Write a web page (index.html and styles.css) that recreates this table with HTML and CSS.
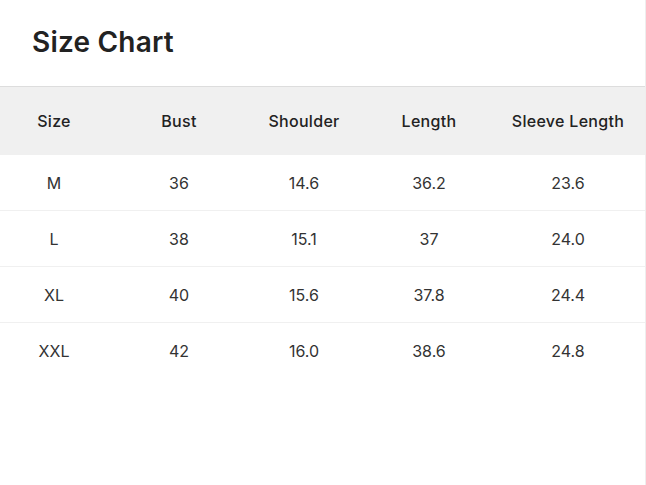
FILE: index.html
```html
<!DOCTYPE html>
<html>
<head>
<meta charset="utf-8">
<link rel="stylesheet" href="styles.css">
</head>
<body>
<div class="page">
  <h1 class="title">Size Chart</h1>
  <table class="chart">
    <colgroup>
      <col class="c1"><col class="c2"><col class="c3"><col class="c4"><col class="c5">
    </colgroup>
    <thead>
      <tr><th>Size</th><th>Bust</th><th>Shoulder</th><th>Length</th><th>Sleeve Length</th></tr>
    </thead>
    <tbody>
      <tr><td>M</td><td>36</td><td>14.6</td><td>36.2</td><td>23.6</td></tr>
      <tr><td>L</td><td>38</td><td>15.1</td><td>37</td><td>24.0</td></tr>
      <tr><td>XL</td><td>40</td><td>15.6</td><td>37.8</td><td>24.4</td></tr>
      <tr><td>XXL</td><td>42</td><td>16.0</td><td>38.6</td><td>24.8</td></tr>
    </tbody>
  </table>
</div>
</body>
</html>
```
FILE: styles.css
```css
html, body {
  margin: 0;
  padding: 0;
  background: #fff;
}
body {
  font-family: Inter, "Liberation Sans", sans-serif;
  color: #333;
}
.page {
  width: 645px;
  height: 485px;
  border-right: 1px solid #eeeeee;
  box-sizing: content-box;
}
.title {
  margin: 0;
  padding: 25px 0 0 32px;
  height: 86px;
  box-sizing: border-box;
  font-size: 28px;
  font-weight: 600;
  color: #222;
  line-height: 34px;
  letter-spacing: 0.2px;
}
.chart {
  width: 645px;
  border-collapse: collapse;
  table-layout: fixed;
}
.c1 { width: 108px; }
.c2 { width: 142px; }
.c3 { width: 108px; }
.c4 { width: 142px; }
.c5 { width: 145px; }
.chart th {
  background: #f0f0f0;
  border-top: 1px solid #dddddd;
  height: 68px;
  padding: 0;
  font-size: 16px;
  font-weight: 500;
  color: #222;
  text-align: center;
  letter-spacing: 0.3px;
}
.chart th:last-child,
.chart td:last-child {
  padding-right: 9px;
}
.chart td {
  height: 55px;
  padding: 0;
  font-size: 16px;
  font-weight: 400;
  color: #333;
  text-align: center;
  border-bottom: 1px solid #f0f0f0;
}
.chart tbody tr:last-child td {
  border-bottom: none;
}
```
